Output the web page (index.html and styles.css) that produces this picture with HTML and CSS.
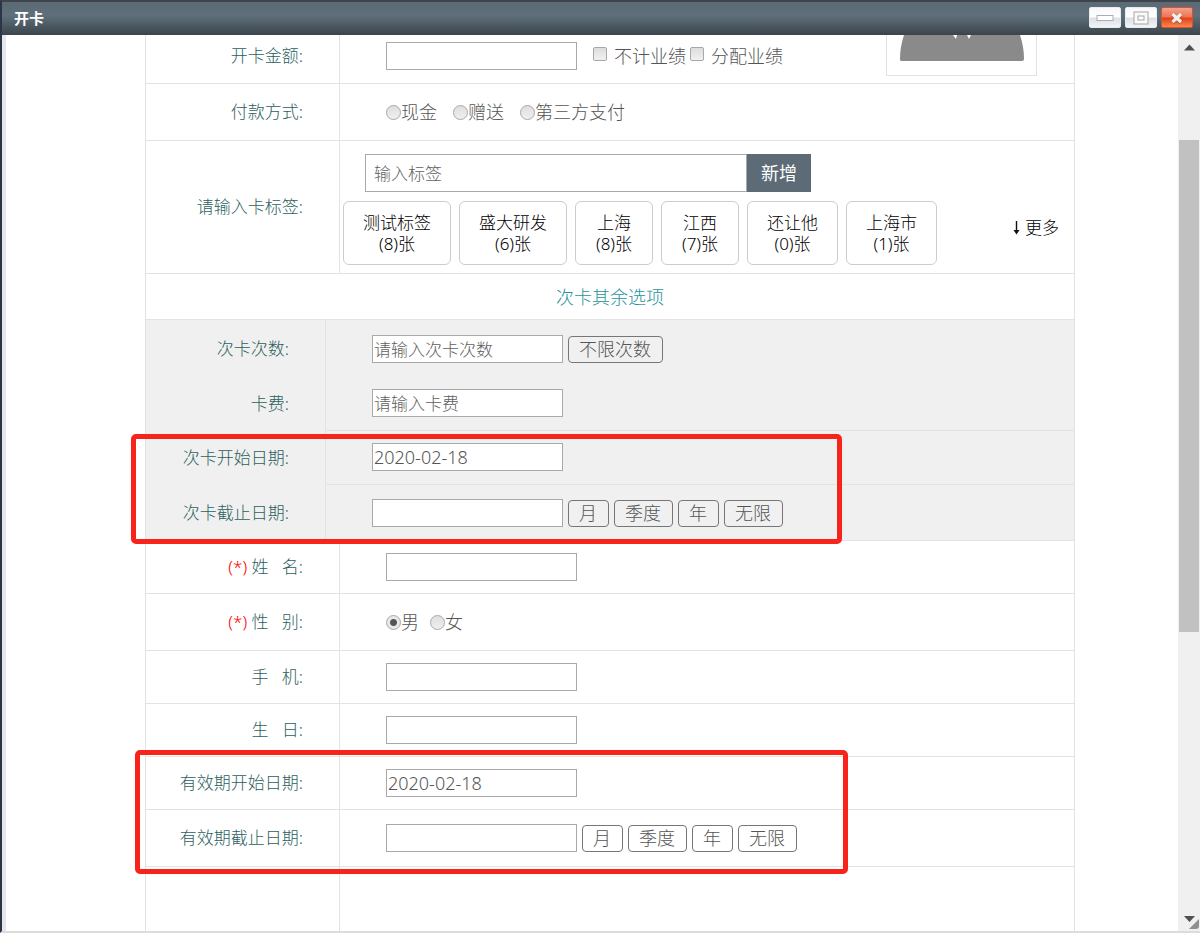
FILE: index.html
```html
<!DOCTYPE html>
<html lang="zh-CN">
<head>
<meta charset="utf-8">
<title>开卡</title>
<link rel="stylesheet" href="styles.css">
</head>
<body>
<div class="window">
  <header class="titlebar">
    <h1 class="title">开卡</h1>
    <div class="controls">
      <button class="control" type="button" aria-label="最小化"><svg width="18" height="14" viewBox="0 0 18 14"><rect x="1" y="4.500" width="16" height="5" fill="#fff" stroke="#aaaeb4"/></svg></button>
      <button class="control" type="button" aria-label="最大化"><svg width="18" height="14" viewBox="0 0 18 14"><rect x="2" y="1" width="14" height="12" fill="#fafafa" stroke="#a5a5a8"/><rect x="6" y="5" width="6" height="4" fill="#fff" stroke="#a5a5a8"/></svg></button>
      <button class="control control-close" type="button" aria-label="关闭"><svg width="18" height="14" viewBox="0 0 18 14"><path d="M4.500 3.500l8.500 8M13 3.500l-8.500 8" fill="none" stroke="#b9543c" stroke-width="4.500"/><path d="M4.500 3l8.500 8M13 3l-8.500 8" fill="none" stroke="#f4efec" stroke-width="3.200"/></svg></button>
    </div>
  </header>
  <div class="body">
    <form class="form">
      <div class="row row-amount">
        <label class="label" for="amount">开卡金额:</label>
        <div class="field">
          <input class="text" id="amount" type="text">
          <div class="checks">
            <label class="check"><input type="checkbox">不计业绩</label>
            <label class="check"><input type="checkbox">分配业绩</label>
          </div>
        </div>
        <div class="avatar"><svg width="126" height="26" viewBox="0 0 126 26"><path d="M5 0H54l3 4 1-4H68l2 4 2-4H121q4 12 4 24 0 2-2 2H2q-1 0-1-2Q1 12 5 0z" fill="#8a8a8a"/></svg></div>
      </div>
      <div class="row row-tall">
        <span class="label" id="pay-label">付款方式:</span>
        <div class="field radios" role="radiogroup" aria-labelledby="pay-label">
          <label class="radio"><input type="radio" name="pay">现金</label>
          <label class="radio"><input type="radio" name="pay">赠送</label>
          <label class="radio"><input type="radio" name="pay">第三方支付</label>
        </div>
      </div>
      <div class="row">
        <label class="label" for="tag">请输入卡标签:</label>
        <div class="tag-field">
          <div class="tag-entry">
            <input class="tag-input" id="tag" type="text" placeholder="输入标签">
            <button class="add" type="button">新增</button>
          </div>
          <div class="tag-line">
            <div class="tags">
              <button class="tag" type="button">测试标签<br>(8)张</button>
              <button class="tag" type="button">盛大研发<br>(6)张</button>
              <button class="tag" type="button">上海<br>(8)张</button>
              <button class="tag" type="button">江西<br>(7)张</button>
              <button class="tag" type="button">还让他<br>(0)张</button>
              <button class="tag" type="button">上海市<br>(1)张</button>
            </div>
            <a class="more" href="#more"><svg width="11" height="15" viewBox="0 0 11 15"><path d="M5.500 0v11" stroke="#111" stroke-width="1.400" fill="none"/><path d="M2.500 9h6L5.500 13.500z" fill="#111"/></svg>更多</a>
          </div>
        </div>
      </div>
      <h2 class="section-title">次卡其余选项</h2>
      <section class="sub">
        <div class="row row-open">
          <label class="label" for="times">次卡次数:</label>
          <div class="field">
            <input class="text" id="times" type="text" placeholder="请输入次卡次数">
            <button class="pick" type="button">不限次数</button>
          </div>
        </div>
        <div class="row">
          <label class="label" for="fee">卡费:</label>
          <div class="field"><input class="text" id="fee" type="text" placeholder="请输入卡费"></div>
        </div>
        <div class="marked marked-card">
          <div class="row">
            <label class="label" for="card-start">次卡开始日期:</label>
            <div class="field"><input class="text" id="card-start" type="text" value="2020-02-18"></div>
          </div>
          <div class="row row-tall">
            <label class="label" for="card-end">次卡截止日期:</label>
            <div class="field">
              <input class="text" id="card-end" type="text">
              <button class="pick" type="button">月</button>
              <button class="pick" type="button">季度</button>
              <button class="pick" type="button">年</button>
              <button class="pick" type="button">无限</button>
            </div>
          </div>
        </div>
      </section>
      <div class="row">
        <label class="label" for="name"><span class="required">(*)</span>&nbsp;姓&nbsp;&nbsp;&nbsp;名:</label>
        <div class="field"><input class="text" id="name" type="text"></div>
      </div>
      <div class="row row-tall">
        <span class="label" id="sex-label"><span class="required">(*)</span>&nbsp;性&nbsp;&nbsp;&nbsp;别:</span>
        <div class="field radios radios-near" role="radiogroup" aria-labelledby="sex-label">
          <label class="radio"><input type="radio" name="sex" checked>男</label>
          <label class="radio"><input type="radio" name="sex">女</label>
        </div>
      </div>
      <div class="row">
        <label class="label" for="phone">手&nbsp;&nbsp;&nbsp;机:</label>
        <div class="field"><input class="text" id="phone" type="text"></div>
      </div>
      <div class="row">
        <label class="label" for="birthday">生&nbsp;&nbsp;&nbsp;日:</label>
        <div class="field"><input class="text" id="birthday" type="text"></div>
      </div>
      <div class="marked marked-valid">
        <div class="row">
          <label class="label" for="valid-start">有效期开始日期:</label>
          <div class="field"><input class="text" id="valid-start" type="text" value="2020-02-18"></div>
        </div>
        <div class="row row-tall">
          <label class="label" for="valid-end">有效期截止日期:</label>
          <div class="field">
            <input class="text" id="valid-end" type="text">
            <button class="pick" type="button">月</button>
            <button class="pick" type="button">季度</button>
            <button class="pick" type="button">年</button>
            <button class="pick" type="button">无限</button>
          </div>
        </div>
      </div>
      <div class="row row-last"><span class="label"></span><div class="field"></div></div>
    </form>
    <div class="scrollbar" aria-hidden="true">
      <svg class="arrow" width="22" height="24" viewBox="0 0 22 24"><path d="M6 15.500l5.500-6 5.500 6z" fill="#505050"/></svg>
      <div class="track-above"></div>
      <div class="thumb"></div>
      <div class="track-below"></div>
      <svg class="arrow" width="22" height="24" viewBox="0 0 22 24"><path d="M6 9h11l-5.500 6z" fill="#505050"/><path d="M11 22L21 12v7q0 3-3 3z" fill="#8f8f8f"/></svg>
    </div>
  </div>
</div>
</body>
</html>
```
FILE: styles.css
```css
*, *::after { box-sizing: border-box; }

body {
  margin: 0;
  background: #fff;
  color: #555;
  font-family: "Noto Sans", "Noto Sans CJK SC", sans-serif;
  font-size: 18px;
  font-weight: 300;
  line-height: 24px;
}

input, button { font: inherit; color: inherit; margin: 0; }

.window {
  display: flex;
  flex-direction: column;
  min-height: 100vh;
  border-top: 2px solid #3f444b;
  border-left: 2px solid #2c3547;
  border-bottom: 2px solid #dcdcdc;
}

.titlebar {
  display: flex;
  align-items: center;
  justify-content: space-between;
  height: 33px;
  padding: 0 7px 2px 12px;
  background: linear-gradient(#5b6a74, #5f707a 40%, #3b444c);
}

.title {
  margin: 0;
  color: #fff;
  font-size: 15px;
  font-weight: 700;
}

.controls { display: flex; gap: 4px; }

.control {
  display: flex;
  align-items: center;
  justify-content: center;
  width: 32px;
  height: 21px;
  padding: 0;
  border: 1px solid #e8ebef;
  border-radius: 2px;
  background: linear-gradient(#f6f7f9, #fff 45%, #dde1e6 55%, #f2f4f6);
}

.control-close {
  border-color: #d9502c;
  background: linear-gradient(#f2a28c, #ee7556 45%, #e3401a 55%, #fa8a4c);
}

.body { display: flex; flex: 1; border-left: 4px solid #e6e6ea; }

.form {
  display: flex;
  flex: 1;
  flex-direction: column;
  margin: 0 103px 0 139px;
  border: 1px solid #e3e3e3;
  border-width: 0 1px;
}

.row { display: flex; }

.label {
  display: flex;
  flex: none;
  align-items: center;
  justify-content: flex-end;
  width: 194px;
  padding-right: 36px;
  border-right: 1px solid #e3e3e3;
  border-bottom: 1px solid #e3e3e3;
  color: #2c605e;
  font-size: 17px;
}

.required { color: #f00; }

.field {
  display: flex;
  flex: 1;
  align-items: center;
  gap: 5px;
  padding: 12px 0 12px 46px;
  border-bottom: 1px solid #e3e3e3;
}

.row-tall .field { padding-top: 14px; padding-bottom: 14px; }

.row-amount .field { padding-top: 7px; padding-bottom: 13px; }

.row-amount .label { padding-bottom: 6px; }

.row-last { flex: 1; }

.row-last .label, .row-last .field { border-bottom: 0; }

.text {
  width: 191px;
  height: 28px;
  padding: 0 1px;
  border: 1px solid #a9a9a9;
  border-radius: 0;
  background: #fff;
}

::placeholder { color: #606060; font-size: 17px; opacity: 1; }

.checks { display: flex; gap: 4px; padding-left: 11px; }

.check { display: flex; align-items: center; gap: 7px; }

.avatar {
  display: flex;
  justify-content: flex-end;
  width: 188px;
  padding-right: 37px;
  border-bottom: 1px solid #e3e3e3;
}

.avatar svg {
  box-sizing: content-box;
  padding: 0 11px 14px 12px;
  border: 1px solid #e3e3e3;
  border-top: 0;
  flex: none;
  align-self: flex-start;
}

.field.radios { gap: 16px; }

.field.radios-near { gap: 11px; }

.radio { display: flex; align-items: center; line-height: 28px; }

.radio input, .check input {
  appearance: none;
  width: 15px;
  height: 15px;
  border: 1px solid #a8a8a8;
  background: linear-gradient(#dedede, #f0f0f0);
}

.radio input { border-radius: 50%; }

.check input {
  width: 14px;
  height: 14px;
  margin-bottom: 4px;
  border-radius: 2px;
}

.radio input:checked {
  background: radial-gradient(#555 0 3px, #e8e8e8 4px);
}

.tag-field {
  flex: 1;
  padding: 13px 15px 8px 3px;
  border-bottom: 1px solid #e3e3e3;
}

.tag-entry { display: flex; padding-left: 22px; }

.tag-input {
  width: 382px;
  height: 38px;
  padding: 0 8px;
  border: 1px solid #a9a9a9;
  border-radius: 0;
  background: #fff;
}

.add {
  width: 64px;
  height: 38px;
  padding: 0;
  border: 0;
  background: #5c6b76;
  color: #fff;
  font-weight: 400;
}

.tag-line {
  display: flex;
  align-items: center;
  justify-content: space-between;
  padding-top: 9px;
}

.tags { display: flex; gap: 8px; }

.tag {
  min-width: 78px;
  padding: 10px 19px;
  border: 1px solid #ccc;
  border-radius: 6px;
  background: #fff;
  color: #000;
  font-size: 17px;
  line-height: 21px;
}

.more {
  display: flex;
  align-items: center;
  gap: 3px;
  padding-bottom: 10px;
  color: #000;
  font-size: 17px;
  text-decoration: none;
}

.section-title {
  margin: 0;
  padding: 11px 0 10px;
  border-bottom: 1px solid #e3e3e3;
  color: #1f939b;
  font-size: 18px;
  font-weight: 300;
  text-align: center;
}

.sub { border-bottom: 1px solid #e3e3e3; background: #f0f0f0; }

.sub .label { width: 180px; border-bottom: 0; }

.sub .field { padding-bottom: 13px; }

.sub .row-open .field { padding-top: 15px; padding-bottom: 14px; border-bottom: 0; }

.sub .row-tall .field { border-bottom: 0; }

.pick {
  height: 27px;
  padding: 0 11px 0 10px;
  border: 1px solid #767676;
  border-radius: 4px;
  background: transparent;
  line-height: 25px;
}

.marked { position: relative; }

/* Highlight frames drawn over the date rows */
.marked::after {
  content: "";
  position: absolute;
  border: 5px solid #f8241b;
  border-radius: 5px;
  pointer-events: none;
}

.marked-card::after { top: 3px; bottom: -4px; left: -15px; width: 711px; }

.marked-valid::after { top: -7px; bottom: -7px; left: -11px; width: 713px; }

.scrollbar {
  display: flex;
  flex-direction: column;
  width: 22px;
  background: #f0f0f0;
}

.arrow { flex: none; }

.track-above { flex: 81; }

.thumb { flex: 492; margin: 0 1px; background: #c1c1c1; }

.track-below { flex: 275; }
```
